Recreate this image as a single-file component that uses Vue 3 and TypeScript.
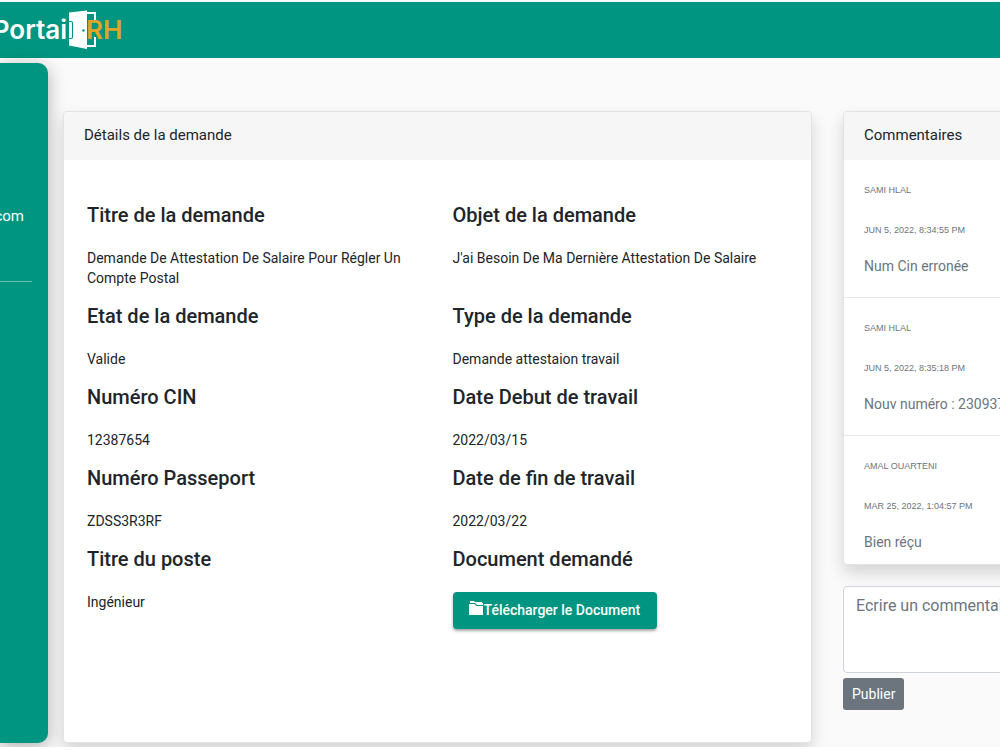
<script setup lang="ts">
interface Field {
  label: string
  value?: string
}
interface Comment {
  author: string
  date: string
  text: string
}

const fields: Field[] = [
  { label: 'Titre de la demande', value: 'Demande De Attestation De Salaire Pour Régler Un Compte Postal' },
  { label: 'Objet de la demande', value: "J'ai Besoin De Ma Dernière Attestation De Salaire" },
  { label: 'Etat de la demande', value: 'Valide' },
  { label: 'Type de la demande', value: 'Demande attestaion travail' },
  { label: 'Numéro CIN', value: '12387654' },
  { label: 'Date Debut de travail', value: '2022/03/15' },
  { label: 'Numéro Passeport', value: 'ZDSS3R3RF' },
  { label: 'Date de fin de travail', value: '2022/03/22' },
  { label: 'Titre du poste', value: 'Ingénieur' },
  { label: 'Document demandé' },
]

const comments: Comment[] = [
  { author: 'SAMI HLAL', date: 'JUN 5, 2022, 8:34:55 PM', text: 'Num Cin erronée' },
  { author: 'SAMI HLAL', date: 'JUN 5, 2022, 8:35:18 PM', text: 'Nouv numéro : 230937' },
  { author: 'AMAL OUARTENI', date: 'MAR 25, 2022, 1:04:57 PM', text: 'Bien réçu' },
]
</script>

<template>
  <div class="page">
    <header class="topbar">
      <svg class="logo" width="140" height="56" viewBox="0 0 140 56" role="img" aria-label="Portail RH">
        <text x="67" y="37" text-anchor="end" class="word light">Portai</text>
        <path d="M87 11h8v8M95 35v9h-8" fill="none" stroke="#fff" stroke-width="2" />
        <path d="M69 10.500l18-2v38.500l-18-3.500z" fill="#fff" />
        <path d="M69 19.500h2q1.500 0 1.500 1.500v14q0 1.500-1.500 1.500h-2" fill="#fff" stroke="#009580" stroke-width="1.200" />
        <circle cx="83.500" cy="28.500" r="1.200" fill="#009580" />
        <text x="86" y="37" class="word gold">RH</text>
      </svg>
    </header>

    <div class="layout">
      <nav class="sidebar" aria-label="Profil">
        <span class="mail">.com</span>
        <hr class="rule" />
      </nav>

      <main class="card details">
        <h1 class="card-head">Détails de la demande</h1>
        <div class="fields">
          <section v-for="f in fields" :key="f.label" class="field">
            <h2>{{ f.label }}</h2>
            <p v-if="f.value">{{ f.value }}</p>
            <button v-else type="button" class="download">
              <svg width="15" height="15" viewBox="0 0 15 15" aria-hidden="true">
                <path d="M1 0h4l1 1h7v1h1v2H8L6 2H1z" fill="#fff" />
                <path d="M0 3h5.500l2 2H14v9H0z" fill="#fff" />
              </svg>Télécharger le Document
            </button>
          </section>
        </div>
      </main>

      <aside class="side">
        <section class="card">
          <h2 class="card-head">Commentaires</h2>
          <article v-for="c in comments" :key="c.date" class="comment">
            <span class="meta">{{ c.author }}</span>
            <span class="meta">{{ c.date }}</span>
            <p>{{ c.text }}</p>
          </article>
        </section>
        <form class="reply" @submit.prevent>
          <textarea aria-label="Commentaire" placeholder="Ecrire un commentaire"></textarea>
          <button type="submit">Publier</button>
        </form>
      </aside>
    </div>
  </div>
</template>

<style>
body {
  background: #fff;
}
</style>

<style scoped>
.page {
  min-height: calc(100vh - 3px);
  box-sizing: border-box;
  border-top: 2px solid #f4fafa;
  overflow: hidden;
  background: #fafafa;
  color: #212529;
  font-family: Roboto, "Liberation Sans", sans-serif;
  font-size: 14px;
  line-height: 20px;
}
.page * {
  box-sizing: border-box;
}
.topbar {
  height: 56px;
  background: #009580;
}
.logo {
  display: block;
}
.word {
  font-family: Inter, "Liberation Sans", sans-serif;
  font-weight: 600;
  font-size: 26px;
}
.light {
  fill: #fff;
}
.gold {
  fill: #e0a526;
}
.layout {
  display: grid;
  grid-template-columns: 48px minmax(0, 1fr) 157px;
  padding-top: 5px;
}
.sidebar {
  display: flex;
  flex-direction: column;
  align-items: flex-end;
  align-self: start;
  min-height: 680px;
  padding-top: 143px;
  border-radius: 0 10px 10px 0;
  background: #009580;
  color: #fff;
  box-shadow: 0 4px 18px rgba(0, 0, 0, 0.3);
}
.mail {
  padding-right: 24px;
  font-size: 15px;
}
.rule {
  width: 32px;
  margin: 55px 16px 0 0;
  border: 0;
  border-top: 1px solid rgba(255, 255, 255, 0.4);
}
.card {
  border: 1px solid #e2e2e2;
  border-radius: 4px;
  background: #fff;
  box-shadow: 0 8px 16px rgba(0, 0, 0, 0.15);
}
.details {
  margin: 48px 31px 0 15px;
}
.card-head {
  margin: 0;
  padding: 11px 20px 13px;
  border-radius: 3px 3px 0 0;
  background: #f6f6f6;
  font-size: 15px;
  line-height: 24px;
  font-weight: 400;
}
.fields {
  display: grid;
  grid-template-columns: 1fr 1fr;
  column-gap: 30px;
  padding: 39px 23px 0;
}
.field h2 {
  margin: 0;
  font-size: 20px;
  line-height: 32px;
  font-weight: 500;
}
.field p {
  margin: 17px 0 12px;
}
.download {
  display: flex;
  align-items: center;
  height: 37px;
  margin-top: 17px;
  padding: 0 17px 1px 16px;
  border: 0;
  border-radius: 4px;
  background: #009580;
  color: #fff;
  font: 500 14px Roboto, sans-serif;
  white-space: nowrap;
  box-shadow: 0 2px 3px rgba(0, 0, 0, 0.35);
}
.download svg {
  flex: none;
  margin-bottom: 4px;
}
.side {
  width: 360px;
  margin-top: 48px;
}
.comment {
  display: flex;
  flex-direction: column;
  padding: 20px 20px 19px;
  color: #6c757d;
}
.comment:last-child {
  padding-bottom: 10px;
}
.comment + .comment {
  border-top: 1px solid #e6e8ea;
}
.meta {
  margin-bottom: 20px;
  font-family: "Liberation Sans", Arial, sans-serif;
  font-size: 9px;
}
.meta + .meta {
  margin-bottom: 14px;
}
.comment p {
  margin: 0;
  line-height: 24px;
}
.reply {
  display: flex;
  flex-direction: column;
  align-items: flex-start;
  gap: 5px;
  margin-top: 21px;
}
.reply textarea {
  width: 100%;
  height: 87px;
  padding: 7px 12px;
  border: 1px solid #ced4da;
  border-radius: 4px;
  background: #fff;
  font: 16px/24px Roboto, sans-serif;
  resize: none;
}
.reply textarea::placeholder {
  color: #6c757d;
}
.reply button {
  height: 32px;
  padding: 0 9px;
  border: 0;
  border-radius: 3px;
  background: #6c757d;
  color: #fff;
  font: 14px Roboto, sans-serif;
}
</style>
